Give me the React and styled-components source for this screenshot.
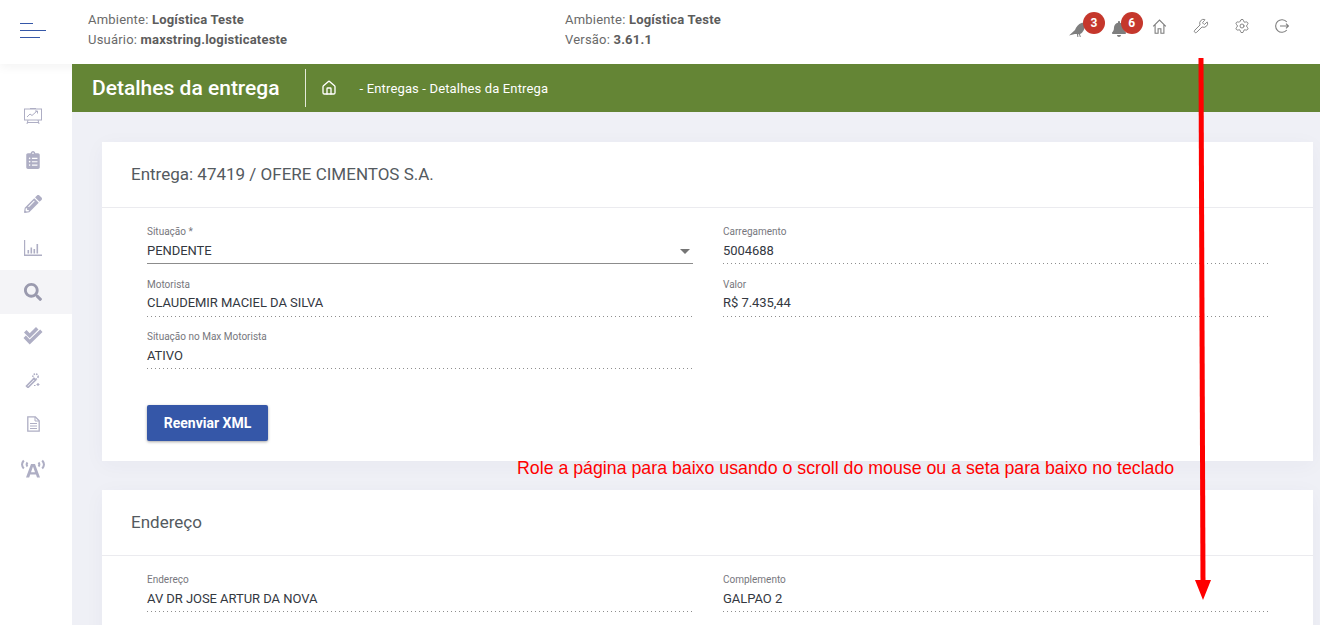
import React from "react";
import styled, { createGlobalStyle } from "styled-components";
import { FaClipboardList, FaPencilAlt, FaSearch, FaBell } from "react-icons/fa";
import { Home, Wrench, Settings } from "lucide-react";

const GlobalStyle = createGlobalStyle`
  html, body {
    margin: 0;
    height: 625px;
    overflow: hidden;
    background: #eff0f6;
    font-family: Roboto, "Noto Sans", sans-serif;
  }
  * { box-sizing: border-box; }
`;

const ChartIcon = () => (
  <svg width="18" height="18" viewBox="0 0 18 18" fill="none" stroke="currentColor" strokeWidth="1">
    <rect x="0.5" y="2" width="17" height="11" />
    <path d="M6 1.5h6M4 13l-1 4M14 13l1 4M3 15.5h12" />
    <path d="M3 10l3-3 2 1.5 5-4.5M11 4h2.5v2.5" />
  </svg>
);

const BarsIcon = () => (
  <svg width="18" height="16" viewBox="0 0 18 16" fill="currentColor">
    <path d="M0 0h1.2v14.6H18V16H0z" />
    <path d="M3.5 10h1.6v3.5H3.5zM6.5 7.5h1.6v6H6.5zM9.5 9h1.6v4.5H9.5zM12.5 4h1.6v9.5h-1.6z" />
  </svg>
);

const ChecksIcon = () => (
  <svg width="20" height="18" viewBox="0 0 20 18" fill="currentColor">
    <path d="M1 5.5l2.5-2.5 3.2 3.2L13 0l2.5 2.5-8.8 8.7z" />
    <path d="M.5 11l2.4-2.4 3.8 3.8L17.2 2.6l2.3 2.4L6.7 17.5z" />
  </svg>
);

const WandIcon = () => (
  <svg width="16" height="16" viewBox="0 0 16 16" fill="none" stroke="currentColor">
    <path d="M1.5 14L9 6.5l1.6 1.6L3 15.5z" strokeWidth="1.6" />
    <circle cx="10.5" cy="4.5" r="2.6" strokeWidth="1.6" strokeDasharray="1.5 1" />
    <path d="M13 11v3M11.5 12.5h3M9 13.5h1.5" strokeWidth="1.2" />
  </svg>
);

const DocIcon = () => (
  <svg width="13" height="16" viewBox="0 0 13 16" fill="none" stroke="currentColor" strokeWidth="1.3">
    <path d="M.8.8h7.5l3.9 3.9v10.5H.8z" />
    <path d="M8 1v4h4M3 7.5h7M3 10h7M3 12.5h7" strokeWidth="1" />
  </svg>
);

const AntennaIcon = () => (
  <svg width="24" height="19" viewBox="0 0 24 19" fill="none" stroke="currentColor">
    <path d="M2.8 1.5C.6 4 .6 7 2.8 9.5M21.2 1.5c2.2 2.5 2.2 5.5 0 8M6.5 3.5c-1 1.2-1 2.8 0 4M17.5 3.5c1 1.2 1 2.8 0 4" strokeWidth="2" />
    <path d="M5 18.5L10 5h4l5 13.5h-3l-1-3H9.2l-1 3zM10 13.200h4L12 7.500z" fill="currentColor" stroke="none" fillRule="evenodd" />
  </svg>
);

const BirdIcon = () => (
  <svg width="18" height="18" viewBox="0 0 18 18" fill="currentColor">
    <path d="M0 15.5L6 10c1-3 3.5-6 6.5-7 1.5-.5 3.5 0 3.5 1.5 0 4-2 8.5-5 9.5l.8 3h-1l-.8-2.8-1 .1.4 2.700h-1l-.5-2.900-2-.2z" />
  </svg>
);

const HomeLine = () => (
  <svg width="15" height="15" viewBox="0 0 14 15" fill="none" stroke="currentColor" strokeWidth="1.1">
    <path d="M.7 7.3L7 1l6.3 6.3M2.6 5.8v8.4h3V9.700h2.800v4.500h3V5.800" />
  </svg>
);

const ExitIcon = () => (
  <svg width="14" height="14" viewBox="0 0 14 14" fill="none" stroke="currentColor" strokeWidth="1.1">
    <path d="M11.8 3A6.3 6.3 0 1 0 11.8 11M5 7h8.5M11 4.700L13.400 7 11 9.300" />
  </svg>
);

const sideItems = [
  { id: "chart", icon: <ChartIcon /> },
  { id: "tasks", icon: <FaClipboardList size={18} /> },
  { id: "edit", icon: <FaPencilAlt size={18} /> },
  { id: "bars", icon: <BarsIcon /> },
  { id: "search", icon: <FaSearch size={18} />, active: true },
  { id: "checks", icon: <ChecksIcon /> },
  { id: "wand", icon: <WandIcon /> },
  { id: "doc", icon: <DocIcon /> },
  { id: "antenna", icon: <AntennaIcon /> },
];

export default function App() {
  return (
    <Page>
      <GlobalStyle />
      <Header>
        <Burger>
          <i />
          <i />
          <i />
        </Burger>
        <Info $width="477px">
          <div>
            Ambiente: <b>Logística Teste</b>
          </div>
          <div>
            Usuário: <b>maxstring.logisticateste</b>
          </div>
        </Info>
        <Info $width="480px">
          <div>
            Ambiente: <b>Logística Teste</b>
          </div>
          <div>
            Versão: <b>3.61.1</b>
          </div>
        </Info>
        <Tools>
          <Tool $low>
            <BirdIcon />
            <Badge $left="25px">3</Badge>
          </Tool>
          <Tool $low>
            <FaBell size={16} />
            <Badge $left="22px">6</Badge>
          </Tool>
          <Tool>
            <HomeLine />
          </Tool>
          <Tool>
            <Wrench size={16} strokeWidth={1.4} />
          </Tool>
          <Tool>
            <Settings size={16} strokeWidth={1.4} />
          </Tool>
          <Tool>
            <ExitIcon />
          </Tool>
        </Tools>
      </Header>
      <Body>
        <Sidebar>
          {sideItems.map((item) => (
            <SideItem key={item.id} $active={item.active}>
              {item.icon}
            </SideItem>
          ))}
        </Sidebar>
        <Main>
          <TitleBar>
            <PageTitle>Detalhes da entrega</PageTitle>
            <Crumbs>
              <HomeCrumb>
                <Home size={16} strokeWidth={2} />
              </HomeCrumb>
              <span>- Entregas - Detalhes da Entrega</span>
            </Crumbs>
          </TitleBar>
          <Content>
            <Card>
              <CardHead>Entrega: 47419 / OFERE CIMENTOS S.A.</CardHead>
              <CardBody>
                <Fields>
                  <SelectField>
                    <Label>Situação *</Label>
                    <Value>PENDENTE</Value>
                    <Caret />
                  </SelectField>
                  <Field>
                    <Label>Carregamento</Label>
                    <Value>5004688</Value>
                  </Field>
                  <Field>
                    <Label>Motorista</Label>
                    <Value>CLAUDEMIR MACIEL DA SILVA</Value>
                  </Field>
                  <Field>
                    <Label>Valor</Label>
                    <Value>R$ 7.435,44</Value>
                  </Field>
                  <Field>
                    <Label>Situação no Max Motorista</Label>
                    <Value>ATIVO</Value>
                  </Field>
                </Fields>
                <PrimaryButton>Reenviar XML</PrimaryButton>
              </CardBody>
            </Card>
            <Card>
              <CardHead>Endereço</CardHead>
              <CardBody>
                <Fields>
                  <Field>
                    <Label>Endereço</Label>
                    <Value>AV DR JOSE ARTUR DA NOVA</Value>
                  </Field>
                  <Field>
                    <Label>Complemento</Label>
                    <Value>GALPAO 2</Value>
                  </Field>
                </Fields>
              </CardBody>
            </Card>
          </Content>
        </Main>
      </Body>
      <ScrollHint>Role a página para baixo usando o scroll do mouse ou a seta para baixo no teclado</ScrollHint>
      <ArrowDrawing width="20" height="545" viewBox="0 0 20 545">
        <path d="M8 0L10 526" stroke="#ff0000" strokeWidth="5" fill="none" />
        <path d="M2 522h16l-8 20z" fill="#ff0000" />
      </ArrowDrawing>
    </Page>
  );
}

const Page = styled.div`
  position: relative;
  width: 1320px;
  height: 625px;
  overflow: hidden;
`;

const Header = styled.header`
  position: relative;
  z-index: 1;
  display: flex;
  align-items: center;
  height: 64px;
  background: #fff;
  box-shadow: 0 3px 10px rgba(0, 0, 0, 0.05);
`;

const Burger = styled.div`
  display: flex;
  flex-direction: column;
  gap: 6px;
  width: 88px;
  margin-top: -3px;
  padding-left: 20px;

  i {
    display: block;
    height: 1px;
    background: #3557a8;
  }
  i:nth-child(1) {
    width: 13px;
  }
  i:nth-child(2) {
    width: 26px;
  }
  i:nth-child(3) {
    width: 20px;
  }
`;

const Info = styled.div`
  width: ${({ $width }) => $width};
  margin-top: -5px;
  font-size: 13px;
  line-height: 20px;
  letter-spacing: 0.2px;
  color: #6a6a6a;

  b {
    font-weight: 700;
    color: #5c5c5c;
  }
`;

const Tools = styled.div`
  display: flex;
  margin-left: 13px;
  margin-top: -12px;
`;

const Tool = styled.div`
  position: relative;
  display: flex;
  align-items: center;
  justify-content: center;
  width: 40.8px;
  height: 20px;
  color: #7e7e7e;
  transform: ${({ $low }) => ($low ? "translateY(3px)" : "none")};
`;

const Badge = styled.span`
  position: absolute;
  top: -7px;
  left: ${({ $left }) => $left};
  width: 22px;
  height: 22px;
  border-radius: 50%;
  background: #c5372c;
  color: #fff;
  font-size: 12px;
  font-weight: 700;
  line-height: 22px;
  text-align: center;
`;

const Body = styled.div`
  display: flex;
  height: 561px;
`;

const Sidebar = styled.nav`
  flex: 0 0 72px;
  padding-top: 30px;
  background: #fff;
`;

const SideItem = styled.div`
  display: flex;
  align-items: center;
  justify-content: center;
  height: 44px;
  padding-right: 6px;
  color: ${({ $active }) => ($active ? "#9a9aae" : "#aeaec4")};
  background: ${({ $active }) => ($active ? "#f4f4f7" : "transparent")};
`;

const Main = styled.main`
  position: relative;
  z-index: 2;
  flex: 1;
  min-width: 0;
`;

const TitleBar = styled.div`
  display: flex;
  align-items: center;
  height: 48px;
  padding-left: 20px;
  background: #648535;
  color: #fff;
`;

const PageTitle = styled.h1`
  margin: 0;
  padding-right: 25px;
  font-size: 21px;
  font-weight: 500;
  line-height: 38px;
  border-right: 1px solid #e4ead9;
`;

const Crumbs = styled.div`
  display: flex;
  align-items: center;
  font-size: 13px;
  letter-spacing: 0.15px;
`;

const HomeCrumb = styled.span`
  display: flex;
  width: 54px;
  padding-left: 15px;
`;

const Content = styled.div`
  display: flex;
  flex-direction: column;
  gap: 29px;
  padding: 30px 7px 0 30px;
`;

const Card = styled.section`
  background: #fff;
  box-shadow: 0 4px 20px rgba(60, 60, 90, 0.04);
`;

const CardHead = styled.h2`
  margin: 0;
  height: 66px;
  padding: 0 29px;
  border-bottom: 1px solid #ebebef;
  font-size: 17px;
  font-weight: 400;
  line-height: 64px;
  color: #545a60;
`;

const CardBody = styled.div`
  padding: 16px 44px 20px 45px;
`;

const Fields = styled.div`
  display: grid;
  grid-template-columns: 546px 546px;
  column-gap: 30px;
  align-items: start;
`;

const Field = styled.div`
  position: relative;
  height: 52.7px;
  padding-top: 1.1px;
  background-image: linear-gradient(to right, #8e8e8e 33%, transparent 0);
  background-position: 0 39px;
  background-repeat: repeat-x;
  background-size: 4px 1px;
`;

const SelectField = styled(Field)`
  background-image: linear-gradient(#8c8c8c, #8c8c8c);
  background-size: 100% 1px;
`;

const Label = styled.div`
  font-size: 10px;
  line-height: 14px;
  color: #77777d;
`;

const Value = styled.div`
  margin-top: 2.5px;
  font-size: 13px;
  line-height: 18px;
  letter-spacing: -0.05px;
  color: #33383f;
`;

const Caret = styled.span`
  position: absolute;
  right: 3px;
  top: 25px;
  border-left: 5px solid transparent;
  border-right: 5px solid transparent;
  border-top: 5px solid #757575;
`;

const PrimaryButton = styled.button`
  display: block;
  width: 121px;
  height: 36px;
  margin-top: 22.9px;
  border: 0;
  border-radius: 2px;
  background: #3557a8;
  box-shadow: 0 1px 3px rgba(0, 0, 0, 0.35);
  color: #fff;
  font-family: inherit;
  font-size: 14px;
  font-weight: 700;
`;

const ScrollHint = styled.div`
  position: absolute;
  z-index: 3;
  left: 517px;
  top: 458px;
  font-family: "Liberation Sans", Arial, sans-serif;
  font-size: 17.75px;
  line-height: 21px;
  color: #ff0000;
  white-space: nowrap;
`;

const ArrowDrawing = styled.svg`
  position: absolute;
  z-index: 3;
  left: 1193px;
  top: 58px;
`;
